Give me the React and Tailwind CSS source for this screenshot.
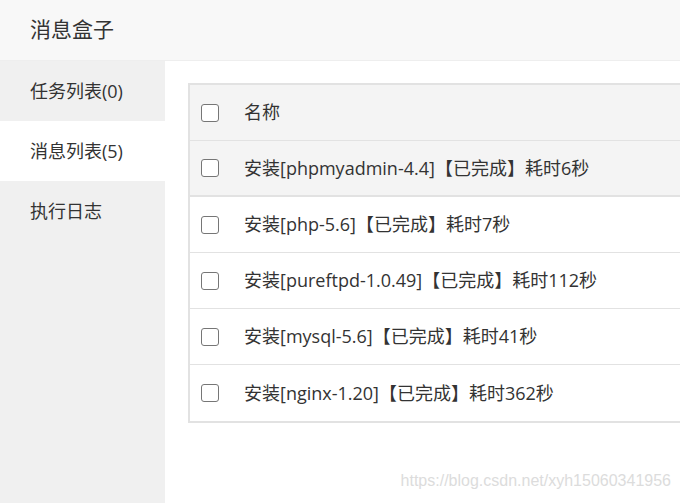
import React from "react";

const rows = [
  "安装[phpmyadmin-4.4]【已完成】耗时6秒",
  "安装[php-5.6]【已完成】耗时7秒",
  "安装[pureftpd-1.0.49]【已完成】耗时112秒",
  "安装[mysql-5.6]【已完成】耗时41秒",
  "安装[nginx-1.20]【已完成】耗时362秒",
];

function Box() {
  return <span className="block w-[18px] h-[18px] rounded-[3px] border-[1.5px] border-[#767676] bg-white" />;
}

export default function App() {
  return (
    <div
      className="relative w-[680px] h-[503px] overflow-hidden bg-white text-[#333]"
      style={{ fontFamily: '"Open Sans", "Noto Sans CJK SC", sans-serif' }}
    >
      {/* Title bar */}
      <div className="h-[61px] bg-[#f8f8f8] border-b border-[#eeeeee] flex items-center pl-[30px] text-[21px]">
        消息盒子
      </div>

      <div className="flex h-[442px]">
        {/* Sidebar */}
        <div className="w-[165px] shrink-0 bg-[#f0f0f0] flex flex-col text-[18px]">
          <div className="h-[60px] flex items-center pl-[30px]">任务列表(0)</div>
          <div className="h-[60px] flex items-center pl-[30px] bg-white">消息列表(5)</div>
          <div className="h-[60px] flex items-center pl-[30px]">执行日志</div>
        </div>

        {/* Content */}
        <div className="flex-1 pt-[22px] pl-[23px]">
          <div className="w-[520px] border-t-2 border-l-2 border-b-2 border-[#e2e2e2] text-[18px]">
            <div className="h-[56px] bg-[#f4f4f4] flex items-center border-b border-[#e2e2e2]">
              <div className="w-[54px] pl-[11px]"><Box /></div>
              <span>名称</span>
            </div>
            {rows.map((r, i) => (
              <div
                key={i}
                className={`h-[56px] flex items-center ${i < rows.length - 1 ? "border-b" : ""} border-[#e2e2e2] ${i === 0 ? "bg-[#f4f4f4] border-b-2" : "bg-white"}`}
              >
                <div className="w-[54px] pl-[11px]"><Box /></div>
                <span>{r}</span>
              </div>
            ))}
          </div>
        </div>
      </div>

      {/* Watermark */}
      <div
        className="absolute right-[9px] bottom-[10px] text-[16px] text-[#dcdcdc]"
        style={{ fontFamily: '"Liberation Sans", Arial, sans-serif' }}
      >
        https://blog.csdn.net/xyh15060341956
      </div>
    </div>
  );
}
